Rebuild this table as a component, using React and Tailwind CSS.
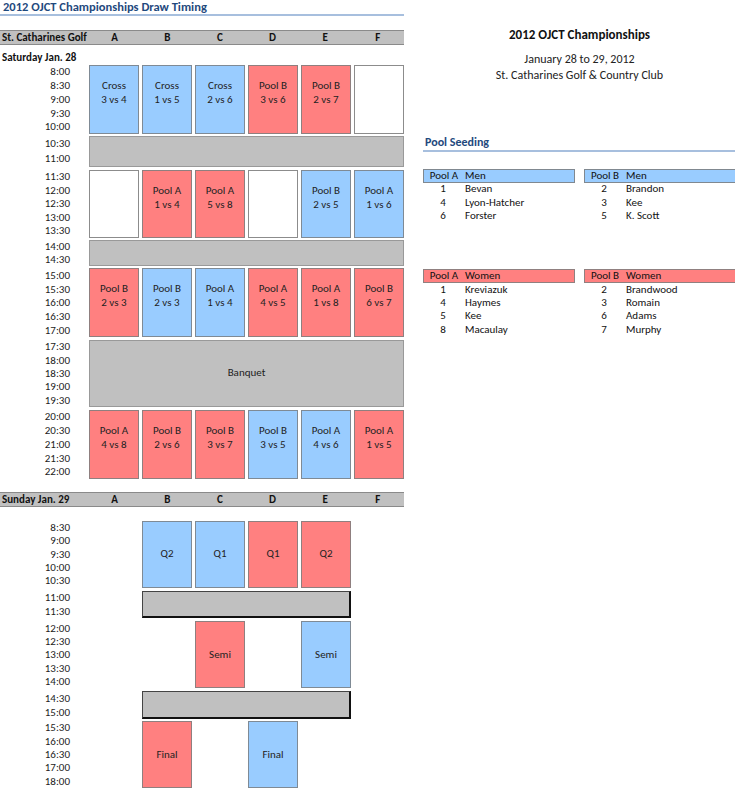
import React from "react";

const FONT = { fontFamily: '"Carlito", "Lato", "Noto Sans", sans-serif' };

const COLORS = {
  b: "bg-[#99ccff] border border-[#7f8a95]",
  r: "bg-[#ff8080] border border-[#8f7f7f]",
  w: "bg-white border border-[#8c8c8c]",
};

function Cell({ c }) {
  if (!c) return <div className="w-[50px]" />;
  const [kind, l1, l2] = c;
  return (
    <div className={`w-[50px] box-border ${COLORS[kind]} text-[11px] text-[#222] text-center`}>
      {l2 ? (
        <div className="pt-[13px] leading-[14px]">
          <div>{l1}</div>
          <div>{l2}</div>
        </div>
      ) : l1 ? (
        <div className="h-full flex items-center justify-center leading-[14px]">{l1}</div>
      ) : null}
    </div>
  );
}

function Times({ times }) {
  return (
    <div className="w-[89px] shrink-0 flex flex-col justify-around pr-[19px] text-right text-[11px] leading-[13px] text-[#1c1c1c]">
      {times.map((t) => (
        <div key={t}>{t}</div>
      ))}
    </div>
  );
}

function Group({ g }) {
  return (
    <div className={`flex ${g.h} ${g.mt}`}>
      <Times times={g.times} />
      {g.gray ? (
        <div className={`flex ${g.grayCls}`}>
          <div className="h-full flex items-center justify-center w-full text-[11px] text-[#222]">
            {g.gray === true ? "" : g.gray}
          </div>
        </div>
      ) : (
        <div className="flex gap-[3px]">
          {g.cells.map((c, i) => (
            <Cell key={i} c={c} />
          ))}
        </div>
      )}
    </div>
  );
}

const GRAY_FULL = "w-[315px] box-border bg-[#c0c0c0] border border-[#999999]";
const GRAY_SUN = "ml-[53px] w-[209px] box-border bg-[#c0c0c0] border border-[#444444] border-r-2 border-b-2 border-r-[#111111] border-b-[#111111]";

const SAT = [
  {
    mt: "mt-0",
    h: "h-[69px]",
    times: ["8:00", "8:30", "9:00", "9:30", "10:00"],
    cells: [
      ["b", "Cross", "3 vs 4"],
      ["b", "Cross", "1 vs 5"],
      ["b", "Cross", "2 vs 6"],
      ["r", "Pool B", "3 vs 6"],
      ["r", "Pool B", "2 vs 7"],
      ["w"],
    ],
  },
  { mt: "mt-[2px]", h: "h-[31px]", times: ["10:30", "11:00"], gray: true, grayCls: GRAY_FULL },
  {
    mt: "mt-[3px]",
    h: "h-[68px]",
    times: ["11:30", "12:00", "12:30", "13:00", "13:30"],
    cells: [
      ["w"],
      ["r", "Pool A", "1 vs 4"],
      ["r", "Pool A", "5 vs 8"],
      ["w"],
      ["b", "Pool B", "2 vs 5"],
      ["b", "Pool A", "1 vs 6"],
    ],
  },
  { mt: "mt-[2px]", h: "h-[27px]", times: ["14:00", "14:30"], gray: true, grayCls: GRAY_FULL },
  {
    mt: "mt-[2px]",
    h: "h-[69px]",
    times: ["15:00", "15:30", "16:00", "16:30", "17:00"],
    cells: [
      ["r", "Pool B", "2 vs 3"],
      ["b", "Pool B", "2 vs 3"],
      ["b", "Pool A", "1 vs 4"],
      ["r", "Pool A", "4 vs 5"],
      ["r", "Pool A", "1 vs 8"],
      ["r", "Pool B", "6 vs 7"],
    ],
  },
  {
    mt: "mt-[3px]",
    h: "h-[67px]",
    times: ["17:30", "18:00", "18:30", "19:00", "19:30"],
    gray: "Banquet",
    grayCls: GRAY_FULL,
  },
  {
    mt: "mt-[3px]",
    h: "h-[69px]",
    times: ["20:00", "20:30", "21:00", "21:30", "22:00"],
    cells: [
      ["r", "Pool A", "4 vs 8"],
      ["r", "Pool B", "2 vs 6"],
      ["r", "Pool B", "3 vs 7"],
      ["b", "Pool B", "3 vs 5"],
      ["b", "Pool A", "4 vs 6"],
      ["r", "Pool A", "1 vs 5"],
    ],
  },
];

const SUN = [
  {
    mt: "mt-0",
    h: "h-[67px]",
    times: ["8:30", "9:00", "9:30", "10:00", "10:30"],
    cells: [null, ["b", "Q2"], ["b", "Q1"], ["r", "Q1"], ["r", "Q2"], null],
  },
  { mt: "mt-[3px]", h: "h-[28px]", times: ["11:00", "11:30"], gray: true, grayCls: GRAY_SUN },
  {
    mt: "mt-[3px]",
    h: "h-[67px]",
    times: ["12:00", "12:30", "13:00", "13:30", "14:00"],
    cells: [null, null, ["r", "Semi"], null, ["b", "Semi"], null],
  },
  { mt: "mt-[3px]", h: "h-[28px]", times: ["14:30", "15:00"], gray: true, grayCls: GRAY_SUN },
  {
    mt: "mt-[2px]",
    h: "h-[67px]",
    times: ["15:30", "16:00", "16:30", "17:00", "18:00"],
    cells: [null, ["r", "Final"], null, ["b", "Final"], null, null],
  },
];

function HeaderBar({ label }) {
  return (
    <div className="flex h-[15px] box-border bg-[#c0c0c0] border-y border-[#8a8a8a] text-[11px] leading-[13px] font-bold text-[#111]">
      <div className="w-[89px] pl-[2px] whitespace-nowrap">{label}</div>
      {["A", "B", "C", "D", "E", "F"].map((l) => (
        <div key={l} className="w-[53px] text-center">
          {l}
        </div>
      ))}
    </div>
  );
}

function PoolTable({ head, color, rows }) {
  return (
    <div className="w-[152px]">
      <div className={`flex h-[14px] box-border border ${color} text-[11px] leading-[12px] text-[#111]`}>
        <div className="w-[40px] text-center">{head[0]}</div>
        <div className="pl-[1px]">{head[1]}</div>
      </div>
      {rows.map(([n, name]) => (
        <div key={name} className="flex h-[13.4px] items-center text-[11px] text-[#111]">
          <div className="w-[40px] text-center">{n}</div>
          <div className="pl-[2px]">{name}</div>
        </div>
      ))}
    </div>
  );
}

export default function App() {
  return (
    <div className="w-[735px] h-[788px] overflow-hidden bg-white flex" style={FONT}>
      <div className="w-[404px] shrink-0 flex flex-col">
        <div className="h-[16px] border-b-2 border-[#a7bfde] pl-[3px] text-[12.5px] leading-[14px] font-bold text-[#1f497d] whitespace-nowrap">
          2012 OJCT Championships Draw Timing
        </div>
        <div className="mt-[14px]">
          <HeaderBar label="St. Catharines Golf" />
        </div>
        <div className="h-[20px] pt-[6px] pl-[2px] text-[11px] leading-[14px] font-bold text-[#111]">
          Saturday Jan. 28
        </div>
        {SAT.map((g, i) => (
          <Group key={i} g={g} />
        ))}
        <div className="mt-[13px]">
          <HeaderBar label="Sunday Jan. 29" />
        </div>
        <div className="h-[14px]" />
        {SUN.map((g, i) => (
          <Group key={i} g={g} />
        ))}
      </div>

      <div className="flex-1 pl-[19px] flex flex-col">
        <div className="mt-[27px] text-center text-[13px] leading-[16px] font-bold text-[#111]">
          2012 OJCT Championships
        </div>
        <div className="mt-[8px] text-center text-[12px] leading-[16px] text-[#222]">
          January 28 to 29, 2012
        </div>
        <div className="text-center text-[12px] leading-[16px] text-[#222]">
          St. Catharines Golf &amp; Country Club
        </div>
        <div className="mt-[52px] border-b-2 border-[#a7bfde] pl-[2px] text-[12px] leading-[15px] font-bold text-[#1f497d]">
          Pool Seeding
        </div>
        <div className="mt-[17px] flex gap-[9px]">
          <PoolTable
            head={["Pool A", "Men"]}
            color="bg-[#99ccff] border-[#808890]"
            rows={[
              ["1", "Bevan"],
              ["4", "Lyon-Hatcher"],
              ["6", "Forster"],
            ]}
          />
          <PoolTable
            head={["Pool B", "Men"]}
            color="bg-[#99ccff] border-[#808890]"
            rows={[
              ["2", "Brandon"],
              ["3", "Kee"],
              ["5", "K. Scott"],
            ]}
          />
        </div>
        <div className="mt-[46px] flex gap-[9px]">
          <PoolTable
            head={["Pool A", "Women"]}
            color="bg-[#ff8080] border-[#908080]"
            rows={[
              ["1", "Kreviazuk"],
              ["4", "Haymes"],
              ["5", "Kee"],
              ["8", "Macaulay"],
            ]}
          />
          <PoolTable
            head={["Pool B", "Women"]}
            color="bg-[#ff8080] border-[#908080]"
            rows={[
              ["2", "Brandwood"],
              ["3", "Romain"],
              ["6", "Adams"],
              ["7", "Murphy"],
            ]}
          />
        </div>
      </div>
    </div>
  );
}
